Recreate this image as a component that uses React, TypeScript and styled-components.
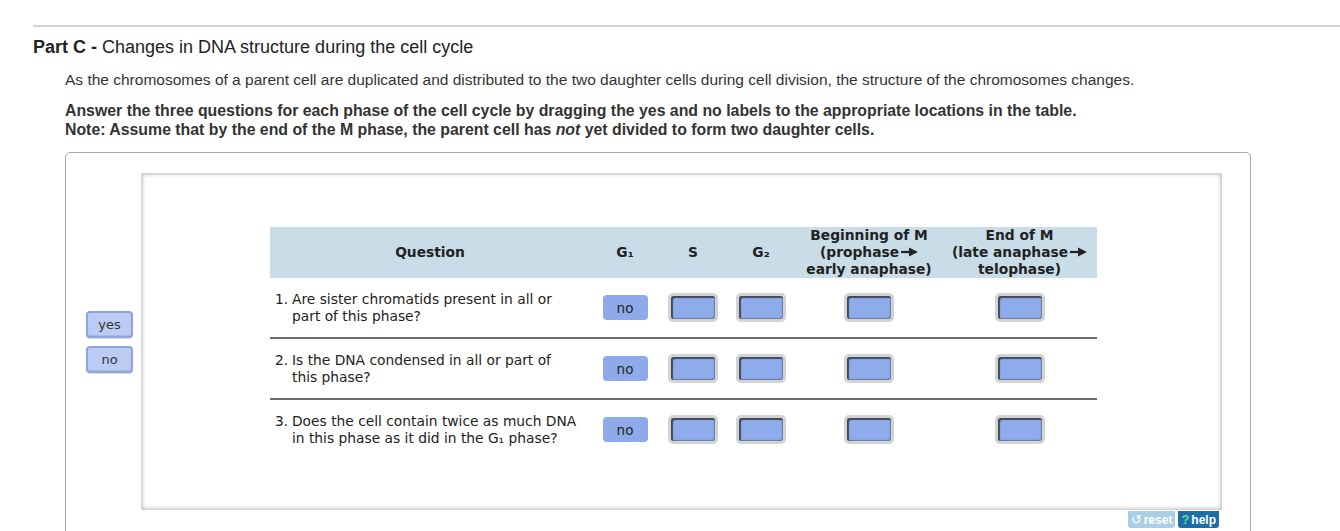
import React from "react";
import styled, { createGlobalStyle } from "styled-components";

const GlobalStyle = createGlobalStyle`
  body {
    margin: 0;
    background: #ffffff;
    font-family: "Liberation Sans", Arial, sans-serif;
    color: #222;
  }
`;

// Kolumnbredder för tabellen (Question, G1, S, G2, början av M, slutet av M)
const columns = "320px 70px 66px 70px 146px 155px";

interface Question {
  id: number;
  text: string;
}

const questions: Question[] = [
  { id: 1, text: "Are sister chromatids present in all or part of this phase?" },
  { id: 2, text: "Is the DNA condensed in all or part of this phase?" },
  { id: 3, text: "Does the cell contain twice as much DNA in this phase as it did in the G₁ phase?" },
];

// Liten pil i rubrikerna (prophase -> early anaphase)
const HeadArrow = () => (
  <ArrowSvg width="17" height="10" viewBox="0 0 17 10">
    <line x1="0" y1="5" x2="10" y2="5" stroke="#222" strokeWidth="2.2" />
    <polygon points="8,0.5 17,5 8,9.5" fill="#222" />
  </ArrowSvg>
);

const App: React.FC = () => {
  return (
    <>
      <GlobalStyle />
      <Page>
        <Rule />
        <Title>
          <b>Part C -</b> Changes in DNA structure during the cell cycle
        </Title>
        <Section>
          <Intro>
            As the chromosomes of a parent cell are duplicated and distributed to the two daughter cells during cell
            division, the structure of the chromosomes changes.
          </Intro>
          <Instructions>
            Answer the three questions for each phase of the cell cycle by dragging the yes and no labels to the
            appropriate locations in the table.
            <br />
            Note: Assume that by the end of the M phase, the parent cell has <i>not</i> yet divided to form two
            daughter cells.
          </Instructions>

          <Box>
            <LabelColumn>
              <Label>yes</Label>
              <Label>no</Label>
            </LabelColumn>

            <Stage>
              <Panel>
                <Table>
                  <HeaderRow>
                    <HeadCell>Question</HeadCell>
                    <HeadCell>G₁</HeadCell>
                    <HeadCell>S</HeadCell>
                    <HeadCell>G₂</HeadCell>
                    <HeadCell>
                      Beginning of M
                      <br />
                      (prophase
                      <HeadArrow />
                      <br />
                      early anaphase)
                    </HeadCell>
                    <HeadCell>
                      End of M
                      <br />
                      (late anaphase
                      <HeadArrow />
                      <br />
                      telophase)
                    </HeadCell>
                  </HeaderRow>

                  {questions.map((q, i) => (
                    <Row key={q.id} $last={i === questions.length - 1}>
                      <QuestionCell>
                        <Num>{q.id}.</Num>
                        <span>{q.text}</span>
                      </QuestionCell>
                      <Cell>
                        <Placed>no</Placed>
                      </Cell>
                      <Cell>
                        <Target />
                      </Cell>
                      <Cell>
                        <Target />
                      </Cell>
                      <Cell>
                        <Target />
                      </Cell>
                      <Cell>
                        <Target />
                      </Cell>
                    </Row>
                  ))}
                </Table>
              </Panel>
              <Toolbar>
                <ResetButton>
                  <span>↺</span> reset
                </ResetButton>
                <HelpButton>
                  <Q>?</Q> help
                </HelpButton>
              </Toolbar>
            </Stage>
          </Box>
        </Section>
      </Page>
    </>
  );
};

// CSS

const Page = styled.div`
  padding: 25px 0 0 33px;
`;

const Rule = styled.div`
  border-top: 2px solid #d4d4d4;
`;

const Title = styled.h2`
  margin: 10px 0 0;
  font-size: 18px;
  line-height: 20px;
  font-weight: 400;
  color: #222;

  b {
    font-weight: 700;
  }
`;

const Section = styled.div`
  padding-left: 32px;
`;

const Intro = styled.p`
  margin: 14px 0 0;
  font-size: 15.5px;
  line-height: 18px;
  color: #333;
`;

const Instructions = styled.p`
  margin: 12px 0 0;
  font-size: 15.85px;
  line-height: 19px;
  font-weight: 700;
  color: #333;
`;

const Box = styled.div`
  margin-top: 13px;
  width: 1186px;
  box-sizing: border-box;
  border: 1px solid #a8a8a8;
  border-radius: 5px;
  padding: 20px 28px 30px 20px;
  display: flex;
  gap: 8px;
`;

const LabelColumn = styled.div`
  width: 47px;
  padding-top: 138px;
  display: flex;
  flex-direction: column;
  gap: 8px;
`;

const Label = styled.div`
  height: 27px;
  box-sizing: border-box;
  border: 2px solid #8ea4dd;
  border-radius: 4px;
  background: #bccbf4;
  box-shadow: inset 0 -1px 0 #a6b8ea, 0 1px 1px rgba(0, 0, 0, 0.15);
  display: flex;
  align-items: center;
  justify-content: center;
  font-family: "DejaVu Sans", Verdana, sans-serif;
  font-size: 13px;
  color: #333;
`;

const Stage = styled.div`
  display: flex;
  flex-direction: column;
`;

const Panel = styled.div`
  width: 1081px;
  height: 337px;
  box-sizing: border-box;
  padding: 54px 0 0 129px;
  background: #fff;
  box-shadow: inset 0 0 4px 1px rgba(0, 0, 0, 0.3);
  border-radius: 2px;
`;

const Table = styled.div`
  width: 827px;
  font-family: "DejaVu Sans", Verdana, sans-serif;
  font-size: 13.8px;
  color: #222;
`;

const HeaderRow = styled.div`
  display: grid;
  grid-template-columns: ${columns};
  height: 51px;
  align-items: center;
  background: #c9dde8;
`;

const HeadCell = styled.div`
  text-align: center;
  font-weight: 700;
  line-height: 17px;
  white-space: nowrap;
`;

const ArrowSvg = styled.svg`
  margin-left: 2px;
  vertical-align: 0;
`;

const Row = styled.div<{ $last: boolean }>`
  display: grid;
  grid-template-columns: ${columns};
  height: 59px;
  align-items: center;
  border-bottom: ${(p) => (p.$last ? "none" : "2px solid #6b6b6b")};
`;

const QuestionCell = styled.div`
  display: flex;
  padding-left: 5px;
  padding-right: 13px;
  line-height: 17px;
`;

const Num = styled.span`
  flex: 0 0 17px;
`;

const Cell = styled.div`
  display: flex;
  justify-content: center;
  align-items: center;
`;

const Placed = styled.div`
  width: 45px;
  height: 25px;
  border-radius: 4px;
  background: #8eaaea;
  display: flex;
  align-items: center;
  justify-content: center;
  font-size: 13.5px;
  color: #222;
`;

const Target = styled.div`
  width: 50px;
  height: 29px;
  box-sizing: border-box;
  border: 3px solid #d3d3d3;
  border-radius: 5px;
  background: #8eabeb;
  box-shadow: inset 2px 2px 1px rgba(40, 40, 40, 0.75), inset -1px -1px 1px rgba(60, 60, 60, 0.45);
`;

const Toolbar = styled.div`
  display: flex;
  justify-content: flex-end;
  gap: 3px;
  padding-right: 3px;
  margin-top: 1px;
`;

const ToolButton = styled.div`
  height: 17px;
  padding: 0 3px;
  display: flex;
  align-items: center;
  gap: 2px;
  border-radius: 0 0 3px 3px;
  font-family: "Liberation Sans", Arial, sans-serif;
  font-size: 12px;
  font-weight: 700;
  color: #fff;
`;

const ResetButton = styled(ToolButton)`
  background: #a9cfe8;

  span {
    font-weight: 400;
    font-size: 13px;
  }
`;

const HelpButton = styled(ToolButton)`
  background: #1d6ea6;
`;

const Q = styled.span`
  color: #56e08a;
  font-size: 13px;
`;

export default App;
